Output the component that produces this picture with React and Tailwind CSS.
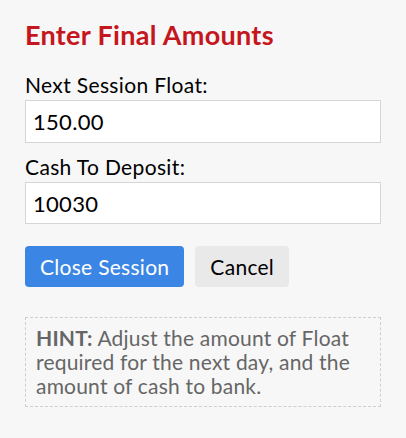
import React, { useState } from 'react';

const App = () => {
  const [float, setFloat] = useState('150.00');
  const [deposit, setDeposit] = useState('10030');

  return (
    <div className="min-h-screen w-full bg-[#f7f7f7] px-[25px] pt-[19px] font-['Lato','Liberation_Sans',sans-serif]">
      {/* Title */}
      <h2 className="text-[27px] font-bold leading-[31px] tracking-[0.3px] text-[#c4161c]">Enter Final Amounts</h2>

      {/* Float */}
      <label className="mt-[23px] mb-[3px] block text-[21px] leading-[24px] tracking-[0.35px] text-black">Next Session Float:</label>
      <input
        value={float}
        onChange={(e) => setFloat(e.target.value)}
        className="block h-[43px] w-full border border-[#d6d6d6] bg-white px-[7px] text-[22px] tracking-[0.3px] text-black outline-none"
      />

      {/* Deposit */}
      <label className="mt-[12px] mb-[3px] block text-[21px] leading-[24px] tracking-[0.35px] text-black">Cash To Deposit:</label>
      <input
        value={deposit}
        onChange={(e) => setDeposit(e.target.value)}
        className="block h-[42px] w-full border border-[#d6d6d6] bg-white px-[7px] text-[22px] tracking-[0.3px] text-black outline-none"
      />

      {/* Actions */}
      <div className="mt-[22px] flex gap-[11px]">
        <button className="h-[41px] rounded-[4px] bg-[#3b86e5] px-[15px] text-[21px] tracking-[0.28px] text-white">Close Session</button>
        <button className="h-[41px] rounded-[4px] bg-[#e9e9e9] px-[15px] text-[21px] tracking-[0.28px] text-black">Cancel</button>
      </div>

      {/* Hint */}
      <div className="mt-[30px] border border-dashed border-[#cfcfcf] px-[10px] py-[8px] text-[21px] leading-[24px] tracking-[0.2px] text-[#666]">
        <b>HINT:</b> Adjust the amount of Float required for the next day, and the amount of cash to bank.
      </div>
    </div>
  );
};

export default App;
